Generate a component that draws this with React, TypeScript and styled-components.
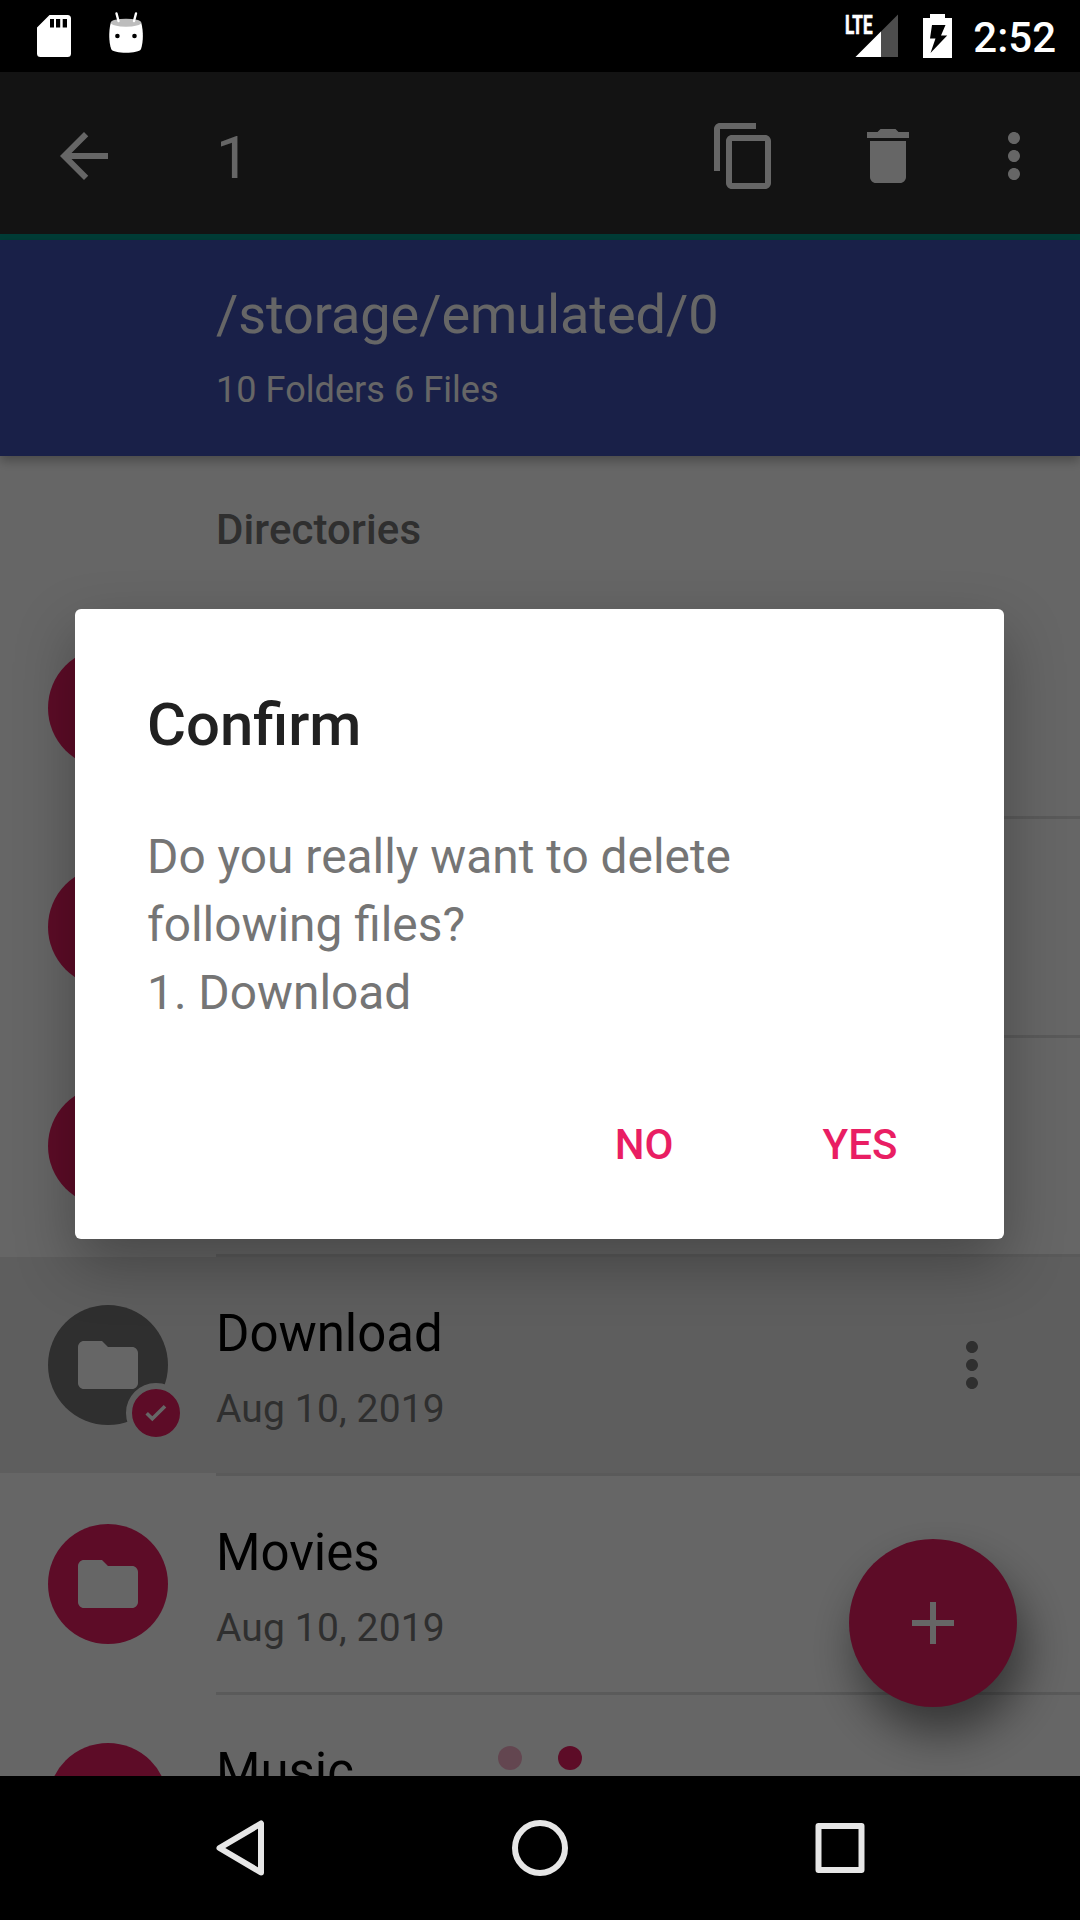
import React from "react";
import styled, { createGlobalStyle } from "styled-components";

const GlobalStyle = createGlobalStyle`
  *, *::before, *::after { box-sizing: border-box; }
  body { margin: 0; background: #000; font-family: Roboto, "Noto Sans", sans-serif; }
`;

const Screen = styled.div`
  position: relative;
  width: 1080px;
  height: 1920px;
  display: flex;
  flex-direction: column;
  overflow: hidden;
  background: #000;
`;

const StatusBar = styled.header`
  flex: none;
  height: 72px;
  padding: 0 24px 0 37px;
  display: flex;
  align-items: center;
  justify-content: space-between;
  color: #fff;
`;

const StatusGroup = styled.div<{ $gap: number }>`
  display: flex;
  align-items: center;
  gap: ${(p) => p.$gap}px;
`;

const Clock = styled.span`
  font-size: 42px;
  font-weight: 500;
  line-height: 50px;
  padding-top: 4px;
  margin-left: -4px;
`;

const Content = styled.main`
  position: relative;
  flex: none;
  height: 1704px;
  display: flex;
  flex-direction: column;
  overflow: hidden;
  background: #fff;
`;

const Toolbar = styled.div`
  flex: none;
  height: 168px;
  padding: 6px 30px 0 48px;
  display: flex;
  align-items: center;
  background: #303030;
  border-bottom: 6px solid #009688;
  color: #fff;
`;

const ToolbarTitle = styled.h1`
  flex: 1;
  margin: 0;
  padding: 4px 0 0 96px;
  font-size: 60px;
  font-weight: 400;
  line-height: 70px;
`;

const ToolbarActions = styled.div`
  display: flex;
  gap: 72px;
  margin-right: 54px;
`;

const PathHeader = styled.section`
  position: relative;
  flex: none;
  height: 216px;
  padding: 43px 0 0 216px;
  display: flex;
  flex-direction: column;
  gap: 22px;
  background: #3f51b5;
  box-shadow: 0 5px 10px rgba(0, 0, 0, 0.28);
  color: #fff;
`;

const PathText = styled.div`
  font-size: 54px;
  line-height: 64px;
  letter-spacing: -0.06px;
`;

const PathSummary = styled.div`
  font-size: 36px;
  line-height: 42px;
  letter-spacing: 0.06px;
`;

const SectionTitle = styled.h2`
  flex: none;
  height: 144px;
  margin: 0;
  padding: 49px 0 0 216px;
  font-size: 42px;
  font-weight: 500;
  line-height: 50px;
  letter-spacing: 0.1px;
  color: #757575;
`;

const List = styled.ul`
  margin: 0;
  padding: 0;
  list-style: none;
`;

const Divider = styled.li`
  height: 3px;
  margin-left: 216px;
  background: #e0e0e0;
`;

const Row = styled.li<{ $selected: boolean }>`
  height: 216px;
  padding: 0 72px 0 48px;
  display: flex;
  align-items: center;
  background: ${(p) => (p.$selected ? "#ececec" : "transparent")};
`;

const Avatar = styled.div<{ $selected: boolean }>`
  position: relative;
  flex: none;
  width: 120px;
  height: 120px;
  display: grid;
  place-items: center;
  border-radius: 50%;
  background: ${(p) => (p.$selected ? "#757575" : "#e91e63")};
  color: #fff;
`;

const CheckBadge = styled.span`
  position: absolute;
  right: -18px;
  bottom: -18px;
  width: 60px;
  height: 60px;
  display: grid;
  place-items: center;
  border: 6px solid #ececec;
  border-radius: 50%;
  background: #e91e63;
`;

const RowText = styled.div`
  flex: 1;
  align-self: flex-start;
  padding: 47px 0 0 48px;
  display: flex;
  flex-direction: column;
  gap: 22px;
`;

const RowTitle = styled.div`
  font-size: 51px;
  line-height: 60px;
  letter-spacing: -0.05px;
  color: #000;
`;

const RowDate = styled.div`
  font-size: 39px;
  line-height: 46px;
  letter-spacing: 0.14px;
  color: #757575;
`;

const RowMenu = styled.span`
  display: flex;
  color: #757575;
`;

const Fab = styled.button`
  position: absolute;
  right: 63px;
  bottom: 69px;
  width: 168px;
  height: 168px;
  padding: 0;
  display: grid;
  place-items: center;
  border: 0;
  border-radius: 50%;
  background: #e91e63;
  box-shadow: 8px 26px 46px rgba(0, 0, 0, 0.48);
  color: #fff;
`;

const PageDots = styled.div`
  position: absolute;
  left: 0;
  right: 0;
  bottom: 6px;
  display: flex;
  justify-content: center;
  gap: 36px;
`;

const PageDot = styled.span<{ $active: boolean }>`
  width: 24px;
  height: 24px;
  border-radius: 50%;
  background: #e91e63;
  opacity: ${(p) => (p.$active ? 1 : 0.35)};
`;

const Scrim = styled.div`
  position: absolute;
  inset: 0;
  display: flex;
  align-items: flex-start;
  padding: 537px 0 0 75px;
  background: rgba(0, 0, 0, 0.6);
`;

const Dialog = styled.div`
  width: 929px;
  height: 630px;
  padding: 81px 48px 0 72px;
  display: flex;
  flex-direction: column;
  border-radius: 6px;
  background: #fff;
  box-shadow: 0 24px 60px rgba(0, 0, 0, 0.3);
`;

const DialogTitle = styled.h2`
  margin: 0;
  font-size: 59.8px;
  font-weight: 500;
  line-height: 70px;
  color: #212121;
`;

const DialogMessage = styled.p`
  margin: 63px 0 0;
  font-size: 47.85px;
  line-height: 68px;
  color: #757575;
`;

const DialogActions = styled.div`
  margin-top: 64px;
  display: flex;
  justify-content: flex-end;
  gap: 24px;
`;

const DialogButton = styled.button`
  width: 192px;
  height: 108px;
  padding: 0;
  border: 0;
  background: none;
  font-family: inherit;
  font-size: 42px;
  font-weight: 500;
  line-height: 50px;
  color: #e91e63;
`;

const NavBar = styled.nav`
  flex: none;
  height: 144px;
  display: flex;
  align-items: center;
  justify-content: center;
  gap: 228px;
  color: #e6e6e6;
`;

const Svg = styled.svg`
  display: block;
  flex: none;
`;

const PATHS = {
  back: "M20 11H7.83l5.59-5.59L12 4l-8 8 8 8 1.41-1.41L7.83 13H20v-2z",
  copy: "M16 1H4c-1.1 0-2 .9-2 2v14h2V3h12V1zm3 4H8c-1.1 0-2 .9-2 2v14c0 1.1.9 2 2 2h11c1.1 0 2-.9 2-2V7c0-1.1-.9-2-2-2zm0 16H8V7h11v14z",
  trash: "M6 19c0 1.1.9 2 2 2h8c1.1 0 2-.9 2-2V7H6v12zM19 4h-3.5l-1-1h-5l-1 1H5v2h14V4z",
  more: "M12 8c1.1 0 2-.9 2-2s-.9-2-2-2-2 .9-2 2 .9 2 2 2zm0 2c-1.1 0-2 .9-2 2s.9 2 2 2 2-.9 2-2-.9-2-2-2zm0 6c-1.1 0-2 .9-2 2s.9 2 2 2 2-.9 2-2-.9-2-2-2z",
  folder: "M10 4H4c-1.1 0-1.99.9-1.99 2L2 18c0 1.1.9 2 2 2h16c1.1 0 2-.9 2-2V8c0-1.1-.9-2-2-2h-8l-2-2z",
  plus: "M19 13h-6v6h-2v-6H5v-2h6V5h2v6h6v2z",
};

function Icon({ name, size = 72 }: { name: keyof typeof PATHS; size?: number }) {
  return (
    <Svg width={size} height={size} viewBox="0 0 24 24" fill="currentColor">
      <path d={PATHS[name]} />
    </Svg>
  );
}

function CheckIcon() {
  return (
    <Svg width="48" height="48" viewBox="0 0 48 48" fill="none" stroke="currentColor" strokeWidth="3.6">
      <path d="M14.700 24.300 20.300 29.700 33 17.200" />
    </Svg>
  );
}

function SdCardIcon() {
  return (
    <Svg width="34" height="72" viewBox="37 0 34 72">
      <path d="M49.5 15H67.500a3.500 3.500 0 0 1 3.500 3.500V53.500a3.500 3.500 0 0 1-3.500 3.500H40.500a3.500 3.500 0 0 1-3.500-3.500V27.500z" fill="#fff" />
      <path d="M50 19h4v8.500h-4zM56 19h4.200v8.500H56zM62.700 19h4.300v8.500h-4.300z" fill="#000" />
    </Svg>
  );
}

function DroidIcon() {
  return (
    <Svg width="36" height="72" viewBox="108 0 36 72">
      <path d="M110.800 22.500C108.600 31 108.700 42 111.200 49 113 54 139 54 141 49 143.400 42 143.500 31 141.200 22.500z" fill="#fff" />
      <ellipse cx="126" cy="22.700" rx="15.200" ry="4" fill="#bdbdbd" />
      <path d="M116.500 13.500 118.500 21M136 13.500 134 21" stroke="#fff" strokeWidth="2.400" strokeLinecap="round" />
      <circle cx="117.400" cy="36" r="2.300" fill="#000" />
      <circle cx="134.500" cy="36" r="2.300" fill="#000" />
    </Svg>
  );
}

function SignalIcon() {
  return (
    <Svg width="54" height="72" viewBox="844 0 54 72">
      <text x="845" y="33.700" fontSize="26" fontWeight="700" fill="#fff" stroke="#fff" strokeWidth="0.7" textLength="27.500" lengthAdjust="spacingAndGlyphs">
        LTE
      </text>
      <path d="M898 14.500V57H855.500z" fill="#4d4d4d" />
      <path d="M881 31.500V57H855.500z" fill="#fff" />
    </Svg>
  );
}

function BatteryIcon() {
  return (
    <Svg width="29" height="72" viewBox="923 0 29 72">
      <path d="M923 18h7v-4h15v4h7v40h-29z" fill="#fff" />
      <path d="M932 25h13.500l-4.500 10.500h6.200L930.500 53l5-14.500h-5.500z" fill="#000" />
    </Svg>
  );
}

function NavIcon({ children }: { children: React.ReactNode }) {
  return (
    <Svg width="72" height="72" viewBox="0 0 72 72" fill="none" stroke="currentColor" strokeWidth="6" strokeLinejoin="round">
      {children}
    </Svg>
  );
}

const FOLDERS = [
  { name: "Alarms", date: "Aug 10, 2019" },
  { name: "Android", date: "Aug 10, 2019" },
  { name: "DCIM", date: "Aug 10, 2019" },
  { name: "Download", date: "Aug 10, 2019", selected: true },
  { name: "Movies", date: "Aug 10, 2019" },
  { name: "Music", date: "" },
].map((folder, index) => ({ ...folder, covered: index < 3 }));

function FolderRow({ name, date, selected = false, covered }: { name: string; date: string; selected?: boolean; covered: boolean }) {
  return (
    <Row $selected={selected}>
      <Avatar $selected={selected}>
        <Icon name="folder" />
        {selected && (
          <CheckBadge>
            <CheckIcon />
          </CheckBadge>
        )}
      </Avatar>
      {!covered && (
        <RowText>
          <RowTitle>{name}</RowTitle>
          {date && <RowDate>{date}</RowDate>}
        </RowText>
      )}
      {selected && (
        <RowMenu>
          <Icon name="more" />
        </RowMenu>
      )}
    </Row>
  );
}

export default function App() {
  return (
    <Screen>
      <GlobalStyle />
      <StatusBar>
        <StatusGroup $gap={37}>
          <SdCardIcon />
          <DroidIcon />
        </StatusGroup>
        <StatusGroup $gap={25}>
          <SignalIcon />
          <BatteryIcon />
          <Clock>2:52</Clock>
        </StatusGroup>
      </StatusBar>
      <Content>
        <Toolbar>
          <Icon name="back" />
          <ToolbarTitle>1</ToolbarTitle>
          <ToolbarActions>
            <Icon name="copy" />
            <Icon name="trash" />
          </ToolbarActions>
          <Icon name="more" />
        </Toolbar>
        <PathHeader>
          <PathText>/storage/emulated/0</PathText>
          <PathSummary>10 Folders 6 Files</PathSummary>
        </PathHeader>
        <SectionTitle>Directories</SectionTitle>
        <List>
          {FOLDERS.map((folder) => (
            <React.Fragment key={folder.name}>
              <FolderRow {...folder} />
              <Divider />
            </React.Fragment>
          ))}
        </List>
        <Fab>
          <Icon name="plus" />
        </Fab>
        <PageDots>
          <PageDot $active={false} />
          <PageDot $active />
        </PageDots>
        <Scrim>
          <Dialog>
            <DialogTitle>Confirm</DialogTitle>
            <DialogMessage>
              Do you really want to delete
              <br />
              following files?
              <br />
              1. Download
            </DialogMessage>
            <DialogActions>
              <DialogButton>NO</DialogButton>
              <DialogButton>YES</DialogButton>
            </DialogActions>
          </Dialog>
        </Scrim>
      </Content>
      <NavBar>
        <NavIcon>
          <path d="M57 11.500V60.500L15.500 36z" />
        </NavIcon>
        <NavIcon>
          <circle cx="36" cy="36" r="25" />
        </NavIcon>
        <NavIcon>
          <rect x="14.500" y="14" width="43" height="44" />
        </NavIcon>
      </NavBar>
    </Screen>
  );
}
